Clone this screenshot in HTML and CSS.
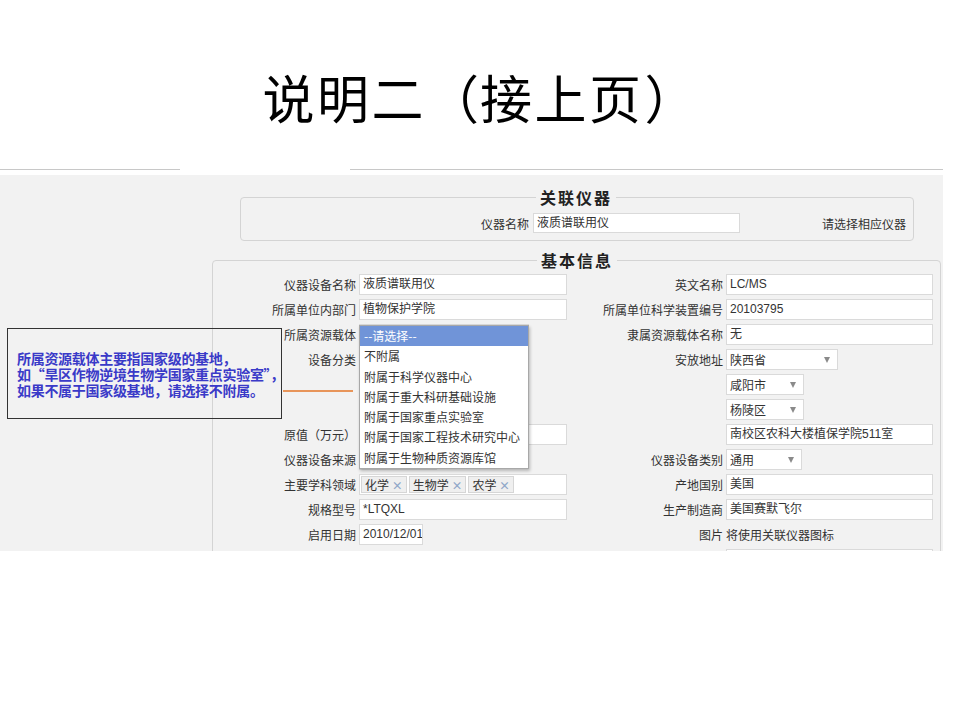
FILE: index.html
```html
<!DOCTYPE html>
<html lang="zh-CN">
<head>
<meta charset="utf-8">
<title>说明二（接上页）</title>
<link rel="stylesheet" href="styles.css">
</head>
<body>
<div class="slide">
  <h1 class="title">说明二<span class="pr">（</span>接上页<span class="pr">）</span></h1>
  <div class="rule"><span class="seg seg-a"></span><span class="seg-gap"></span><span class="seg seg-b"></span></div>
  <div class="shot">
    <fieldset class="fs fs1">
      <legend>关联仪器</legend>
      <div class="assoc-row">
        <span class="assoc-label">仪器名称</span>
        <div class="inp assoc-inp">液质谱联用仪</div>
        <span class="assoc-hint">请选择相应仪器</span>
      </div>
    </fieldset>
    <fieldset class="fs fs2">
      <legend>基本信息</legend>
      <div class="grid">
        <span class="lbl">仪器设备名称</span><div class="cell"><div class="inp">液质谱联用仪</div></div>
        <span class="lbl">英文名称</span><div class="cell"><div class="inp">LC/MS</div></div>

        <span class="lbl">所属单位内部门</span><div class="cell"><div class="inp">植物保护学院</div></div>
        <span class="lbl">所属单位科学装置编号</span><div class="cell"><div class="inp">20103795</div></div>

        <span class="lbl">所属资源载体</span><div class="cell"><div class="sel w170">--请选择--<i class="arr"></i></div></div>
        <span class="lbl">隶属资源载体名称</span><div class="cell"><div class="inp">无</div></div>

        <span class="lbl">设备分类</span><div class="cell"><div class="sel w170"><i class="arr"></i></div></div>
        <span class="lbl">安放地址</span><div class="cell"><div class="sel w112">陕西省<i class="arr"></i></div></div>

        <span class="lbl lbl-empty"></span><div class="cell"></div>
        <span class="lbl lbl-empty"></span><div class="cell"><div class="sel w78">咸阳市<i class="arr"></i></div></div>

        <span class="lbl lbl-empty"></span><div class="cell"></div>
        <span class="lbl lbl-empty"></span><div class="cell"><div class="sel w78">杨陵区<i class="arr"></i></div></div>

        <span class="lbl">原值（万元）</span><div class="cell"><div class="inp"></div></div>
        <span class="lbl lbl-empty"></span><div class="cell"><div class="inp">南校区农科大楼植保学院511室</div></div>

        <span class="lbl">仪器设备来源</span><div class="cell"><div class="sel w78"><i class="arr"></i></div></div>
        <span class="lbl">仪器设备类别</span><div class="cell"><div class="sel w76">通用<i class="arr"></i></div></div>

        <span class="lbl">主要学科领域</span><div class="cell"><div class="inp tags"><span class="tag">化学 <b>×</b></span><span class="tag">生物学 <b>×</b></span><span class="tag">农学 <b>×</b></span></div></div>
        <span class="lbl">产地国别</span><div class="cell"><div class="inp">美国</div></div>

        <span class="lbl">规格型号</span><div class="cell"><div class="inp">*LTQXL</div></div>
        <span class="lbl">生产制造商</span><div class="cell"><div class="inp">美国赛默飞尔</div></div>

        <span class="lbl">启用日期</span><div class="cell"><div class="inp w64">2010/12/01</div></div>
        <span class="lbl">图片</span><div class="cell"><span class="plain">将使用关联仪器图标</span></div>

        <span class="lbl lbl-empty"></span><div class="cell"></div>
        <span class="lbl lbl-empty"></span><div class="cell"><div class="inp"></div></div>
      </div>
    </fieldset>

    <div class="note">
      <p>所属资源载体主要指国家级的基地，<br>如“旱区作物逆境生物学国家重点实验室”，<br>如果不属于国家级基地，请选择不附属。</p>
    </div>
    <div class="connector"></div>

    <ul class="dropdown">
      <li class="active">--请选择--</li>
      <li>不附属</li>
      <li>附属于科学仪器中心</li>
      <li>附属于重大科研基础设施</li>
      <li>附属于国家重点实验室</li>
      <li>附属于国家工程技术研究中心</li>
      <li>附属于生物种质资源库馆</li>
    </ul>
  </div>
</div>
</body>
</html>
```

FILE: styles.css
```css
* { box-sizing: border-box; }
html, body { margin: 0; padding: 0; background: #fff; }
body {
  font-family: "Noto Sans CJK SC", "Liberation Sans", sans-serif;
  color: #333;
}
.slide { width: 960px; height: 720px; position: relative; overflow: hidden; }

.title {
  margin: 0;
  padding: 67px 0 0 0;
  height: 169px;
  font-size: 52px;
  line-height: 60px;
  font-weight: 400;
  letter-spacing: 2.5px;
  color: #000;
  text-align: center;
  white-space: nowrap;
}
.title .pr {
  display: inline-block;
  width: 54px;
  letter-spacing: 0;
  text-align: center;
  vertical-align: top;
}

.rule { display: flex; height: 1px; margin-bottom: 5px; width: 943px; }
.seg { height: 1px; background: #c8c8c8; }
.seg-a { width: 180px; }
.seg-gap { width: 170px; }
.seg-b { flex: 1; }

.shot {
  position: relative;
  width: 943px;
  height: 376px;
  background: #f2f2f2;
  overflow: hidden;
  padding-top: 12px;
}

.fs {
  border: 1px solid #d4d4d4;
  border-radius: 4px;
  margin: 0;
  padding: 0;
  min-width: 0;
}
.fs legend {
  font-size: 16px;
  line-height: 20px;
  font-weight: 700;
  letter-spacing: 2px;
  color: #222;
  padding: 0 4px;
}
.fs1 { margin-left: 240px; width: 674px; padding: 6px 7px 7px 0; }
.fs1 legend { margin-left: 295px; }
.fs2 { margin-left: 212px; margin-top: 9px; width: 729px; padding: 4px 0 0 0; }
.fs2 legend { margin-left: 324px; }

.assoc-row { display: flex; align-items: center; height: 20px; }
.assoc-label { flex: none; width: 292px; text-align: right; font-size: 12px; padding-right: 4px; }
.inp.assoc-inp { flex: none; width: 207px; height: 20px; line-height: 18px; }
.assoc-hint { margin-left: auto; font-size: 12px; white-space: nowrap; }

.grid {
  display: grid;
  grid-template-columns: 146px 208px 159px 207px;
  grid-auto-rows: 21px;
  row-gap: 4px;
}
.lbl {
  text-align: right;
  padding-right: 3px;
  font-size: 12px;
  line-height: 21px;
  white-space: nowrap;
}
.lbl-empty { visibility: hidden; }
.cell { display: flex; }

.inp {
  width: 100%;
  height: 21px;
  background: #fff;
  border: 1px solid #dadada;
  padding: 0 3px;
  font-family: "Liberation Sans", "Noto Sans CJK SC", sans-serif;
  font-size: 12px;
  line-height: 19px;
  color: #333;
  white-space: nowrap;
  overflow: hidden;
}
.inp.w64 { width: 64px; flex: none; }

.sel {
  position: relative;
  flex: none;
  height: 21px;
  background: #fff;
  border: 1px solid #dadada;
  padding: 0 3px;
  font-size: 12px;
  line-height: 19px;
  color: #333;
}
.w170 { width: 170px; }
.w112 { width: 112px; }
.w78 { width: 78px; }
.w76 { width: 76px; }
.arr {
  position: absolute;
  right: 7px;
  top: 7px;
  width: 0; height: 0;
  border-left: 3.5px solid transparent;
  border-right: 3.5px solid transparent;
  border-top: 6px solid #8a8a8a;
}

.tags { display: flex; align-items: center; gap: 2px; padding: 0 1px; font-family: "Noto Sans CJK SC", sans-serif; }
.tag {
  height: 17px;
  line-height: 15px;
  padding: 0 3px;
  background: #efefef;
  border: 1px solid #d6d6d6;
  font-size: 12px;
}
.tag b { color: #8ea6c8; font-weight: 700; font-size: 11px; }

.plain { font-size: 12px; line-height: 21px; }

.note {
  position: absolute;
  left: 7px;
  top: 153px;
  width: 275px;
  height: 91px;
  border: 1px solid #333;
  display: flex;
  align-items: center;
  padding-left: 9px;
}
.note p {
  margin: 0;
  font-size: 14px;
  line-height: 16px;
  font-weight: 700;
  color: #3a3ac8;
  white-space: nowrap;
  letter-spacing: -0.3px;
}
.connector {
  position: absolute;
  left: 283px;
  top: 215px;
  width: 70px;
  height: 1.5px;
  background: #e8955a;
}

.dropdown {
  position: absolute;
  left: 359px;
  top: 150px;
  width: 170px;
  margin: 0;
  padding: 0;
  list-style: none;
  background: #fff;
  border: 1px solid #a8a8a8;
  box-shadow: 1px 2px 3px rgba(0,0,0,0.25);
}
.dropdown li {
  height: 20.3px;
  line-height: 20px;
  padding-left: 4px;
  font-size: 12px;
  color: #333;
  white-space: nowrap;
}
.dropdown li.active { background: #7094d8; color: #fff; }
```
